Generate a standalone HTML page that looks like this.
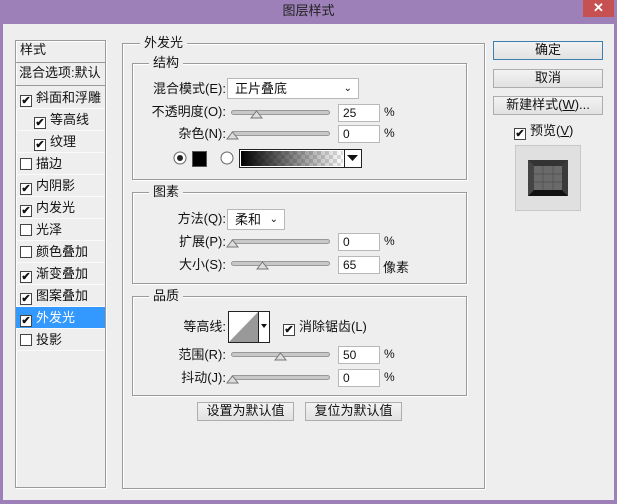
<!DOCTYPE html><html><head><meta charset="utf-8"><style>
*{box-sizing:border-box;margin:0;padding:0}
body{width:617px;height:504px;overflow:hidden;background:#9d80b8;font-family:"Liberation Sans","Noto Sans CJK SC",sans-serif;font-size:12px;color:#111;position:relative}
.a{position:absolute}
#win{left:3px;top:24px;width:611px;height:476px;background:#eeeeee}
.title{left:0;top:0;width:617px;height:24px;line-height:22px;text-align:center;font-size:13px;color:#222}
.close{left:583px;top:0;width:31px;height:17px;background:#c75050;color:#fff;text-align:center;line-height:16px;font-size:13px;font-weight:bold}
.box{border:1px solid #9a9a9a;box-shadow:1px 1px 0 #fff, inset 1px 1px 0 #fff}
.leg{background:#eeeeee;padding:0 4px;line-height:14px;font-size:13px}
.row{left:16px;width:89px;height:22px;line-height:22px;border-bottom:1px solid #fafafa;font-size:13px;white-space:nowrap;overflow:hidden}
.cb{display:inline-block;width:12px;height:12px;border:1px solid #444;background:#fff;vertical-align:-2px;margin-right:4px;position:relative;font-size:11px;line-height:10px;text-align:center;font-weight:bold}
.lbl{font-size:13px;text-align:right;white-space:nowrap;line-height:16px}
.inp{background:#fff;border:1px solid #b8b8b8;height:18px;line-height:16px;padding-left:4px;font-size:12px}
.track{height:5px;border:1px solid #999;border-radius:3px;background:#c8c8c8}
.btn{border:1px solid #adadad;background:linear-gradient(#f3f3f3,#e2e2e2);text-align:center;font-size:13px;line-height:16px}
</style></head><body>
<div class="a title">图层样式</div>
<div class="a close">✕</div>
<div class="a" id="win"></div>

<div class="a box" style="left:15px;top:40px;width:91px;height:448px"></div>
<div class="a" style="left:20px;top:41px;font-size:13px;line-height:18px">样式</div>
<div class="a" style="left:16px;top:62px;width:89px;height:1px;background:#999"></div>
<div class="a" style="left:19px;top:65px;font-size:13px;line-height:16px;white-space:nowrap;width:86px;overflow:hidden">混合选项:默认</div>
<div class="a" style="left:16px;top:85px;width:89px;height:1px;background:#999"></div>
<div class="a row" style="top:87px;padding-left:4px"><span class="cb">✔</span>斜面和浮雕</div>
<div class="a row" style="top:109px;padding-left:18px"><span class="cb">✔</span>等高线</div>
<div class="a row" style="top:131px;padding-left:18px"><span class="cb">✔</span>纹理</div>
<div class="a row" style="top:153px;padding-left:4px"><span class="cb"></span>描边</div>
<div class="a row" style="top:175px;padding-left:4px"><span class="cb">✔</span>内阴影</div>
<div class="a row" style="top:197px;padding-left:4px"><span class="cb">✔</span>内发光</div>
<div class="a row" style="top:219px;padding-left:4px"><span class="cb"></span>光泽</div>
<div class="a row" style="top:241px;padding-left:4px"><span class="cb"></span>颜色叠加</div>
<div class="a row" style="top:263px;padding-left:4px"><span class="cb">✔</span>渐变叠加</div>
<div class="a row" style="top:285px;padding-left:4px"><span class="cb">✔</span>图案叠加</div>
<div class="a row" style="top:307px;padding-left:4px;background:#3399ff;color:#fff"><span class="cb" style="color:#111">✔</span>外发光</div>
<div class="a row" style="top:329px;padding-left:4px"><span class="cb"></span>投影</div>

<div class="a box" style="left:122px;top:43px;width:363px;height:446px"></div>
<div class="a leg" style="left:140px;top:36px">外发光</div>

<div class="a box" style="left:132px;top:63px;width:335px;height:117px"></div>
<div class="a leg" style="left:149px;top:56px">结构</div>
<div class="a lbl" style="left:140px;top:81px;width:86px">混合模式(E):</div>
<div class="a inp" style="left:227px;top:78px;width:132px;height:21px;font-size:13px;line-height:19px;padding-left:7px">正片叠底<span style="position:absolute;right:6px;top:0;font-size:10px">&#8964;</span></div>
<div class="a lbl" style="left:140px;top:104px;width:86px">不透明度(O):</div>
<div class="a track" style="left:231px;top:110px;width:99px"></div>
<svg class="a" style="left:250px;top:109px" width="13" height="10"><path d="M1 9 L6.5 2 L12 9 Z" fill="#ddd" stroke="#777"/></svg>
<div class="a inp" style="left:338px;top:104px;width:42px">25</div>
<div class="a" style="left:384px;top:105px">%</div>
<div class="a lbl" style="left:140px;top:126px;width:86px">杂色(N):</div>
<div class="a track" style="left:231px;top:131px;width:99px"></div>
<svg class="a" style="left:226px;top:130px" width="13" height="10"><path d="M1 9 L6.5 2 L12 9 Z" fill="#ddd" stroke="#777"/></svg>
<div class="a inp" style="left:338px;top:125px;width:42px">0</div>
<div class="a" style="left:384px;top:126px">%</div>
<svg class="a" style="left:173px;top:151px" width="14" height="14"><circle cx="7" cy="7" r="6" fill="#fff" stroke="#666"/><circle cx="7" cy="7" r="3" fill="#222"/></svg>
<div class="a" style="left:192px;top:151px;width:15px;height:16px;background:#000;border:1px solid #555"></div>
<svg class="a" style="left:220px;top:151px" width="14" height="14"><circle cx="7" cy="7" r="6" fill="#fff" stroke="#666"/></svg>
<div class="a" style="left:239px;top:149px;width:123px;height:19px;border:1px solid #222;background:#fff"></div>
<div class="a" style="left:241px;top:151px;width:102px;height:15px;background:repeating-conic-gradient(#ddd 0 25%,#fff 0 50%) 0 0/8px 8px"></div>
<div class="a" style="left:241px;top:151px;width:102px;height:15px;background:linear-gradient(90deg,#000,rgba(0,0,0,0))"></div>
<div class="a" style="left:344px;top:150px;width:1px;height:17px;background:#222"></div>
<svg class="a" style="left:347px;top:155px" width="12" height="6"><path d="M0 0 H11 L5.5 6 Z" fill="#111"/></svg>

<div class="a box" style="left:132px;top:192px;width:335px;height:92px"></div>
<div class="a leg" style="left:149px;top:185px">图素</div>
<div class="a lbl" style="left:140px;top:211px;width:86px">方法(Q):</div>
<div class="a inp" style="left:227px;top:209px;width:58px;height:21px;font-size:13px;line-height:19px;padding-left:7px">柔和<span style="position:absolute;right:6px;top:0;font-size:10px">&#8964;</span></div>
<div class="a lbl" style="left:140px;top:234px;width:86px">扩展(P):</div>
<div class="a track" style="left:231px;top:239px;width:99px"></div>
<svg class="a" style="left:226px;top:238px" width="13" height="10"><path d="M1 9 L6.5 2 L12 9 Z" fill="#ddd" stroke="#777"/></svg>
<div class="a inp" style="left:338px;top:233px;width:42px">0</div>
<div class="a" style="left:384px;top:234px">%</div>
<div class="a lbl" style="left:140px;top:257px;width:86px">大小(S):</div>
<div class="a track" style="left:231px;top:261px;width:99px"></div>
<svg class="a" style="left:256px;top:260px" width="13" height="10"><path d="M1 9 L6.5 2 L12 9 Z" fill="#ddd" stroke="#777"/></svg>
<div class="a inp" style="left:338px;top:256px;width:42px">65</div>
<div class="a" style="left:383px;top:257px;font-size:13px">像素</div>

<div class="a box" style="left:132px;top:296px;width:335px;height:100px"></div>
<div class="a leg" style="left:149px;top:289px">品质</div>
<div class="a lbl" style="left:140px;top:319px;width:86px">等高线:</div>
<div class="a" style="left:228px;top:311px;width:42px;height:32px;border:1px solid #222;background:#fff"></div>
<svg class="a" style="left:229px;top:312px" width="29" height="30"><path d="M0 30 L29 0 V30 Z" fill="#999"/></svg>
<div class="a" style="left:258px;top:312px;width:1px;height:30px;background:#222"></div>
<svg class="a" style="left:261px;top:324px" width="6" height="4"><path d="M0 0H6L3 4Z" fill="#111"/></svg>
<div class="a" style="left:283px;top:319px;font-size:13px;line-height:16px"><span class="cb">✔</span>消除锯齿(L)</div>
<div class="a lbl" style="left:140px;top:347px;width:86px">范围(R):</div>
<div class="a track" style="left:231px;top:352px;width:99px"></div>
<svg class="a" style="left:274px;top:351px" width="13" height="10"><path d="M1 9 L6.5 2 L12 9 Z" fill="#ddd" stroke="#777"/></svg>
<div class="a inp" style="left:338px;top:346px;width:42px">50</div>
<div class="a" style="left:384px;top:347px">%</div>
<div class="a lbl" style="left:140px;top:370px;width:86px">抖动(J):</div>
<div class="a track" style="left:231px;top:375px;width:99px"></div>
<svg class="a" style="left:226px;top:374px" width="13" height="10"><path d="M1 9 L6.5 2 L12 9 Z" fill="#ddd" stroke="#777"/></svg>
<div class="a inp" style="left:338px;top:369px;width:42px">0</div>
<div class="a" style="left:384px;top:370px">%</div>

<div class="a btn" style="left:197px;top:402px;width:97px;height:19px">设置为默认值</div>
<div class="a btn" style="left:305px;top:402px;width:97px;height:19px">复位为默认值</div>

<div class="a btn" style="left:493px;top:41px;width:110px;height:19px;border-color:#3c7fb1">确定</div>
<div class="a btn" style="left:493px;top:69px;width:110px;height:19px">取消</div>
<div class="a btn" style="left:493px;top:96px;width:110px;height:19px">新建样式(<u>W</u>)...</div>
<div class="a" style="left:514px;top:123px;font-size:13px;line-height:16px"><span class="cb">✔</span>预览(<u>V</u>)</div>
<svg class="a" style="left:515px;top:145px" width="66" height="66">
<rect x="0.5" y="0.5" width="65" height="65" fill="#e0e0e0" stroke="#c8c8c8"/>
<rect x="13" y="15" width="40" height="36" fill="#555"/>
<path d="M13 15 L53 15 L47 21 L19 21 Z" fill="#333"/>
<path d="M13 51 L53 51 L47 45 L19 45 Z" fill="#111"/>
<path d="M13 15 L19 21 L19 45 L13 51 Z" fill="#444"/>
<path d="M53 15 L47 21 L47 45 L53 51 Z" fill="#3a3a3a"/>
<rect x="19" y="21" width="28" height="24" fill="#6a6a6a"/>
<path d="M19 29 H47 M19 37 H47 M28 21 V45 M38 21 V45" stroke="#555" stroke-width="1"/>
</svg>
</body></html>
